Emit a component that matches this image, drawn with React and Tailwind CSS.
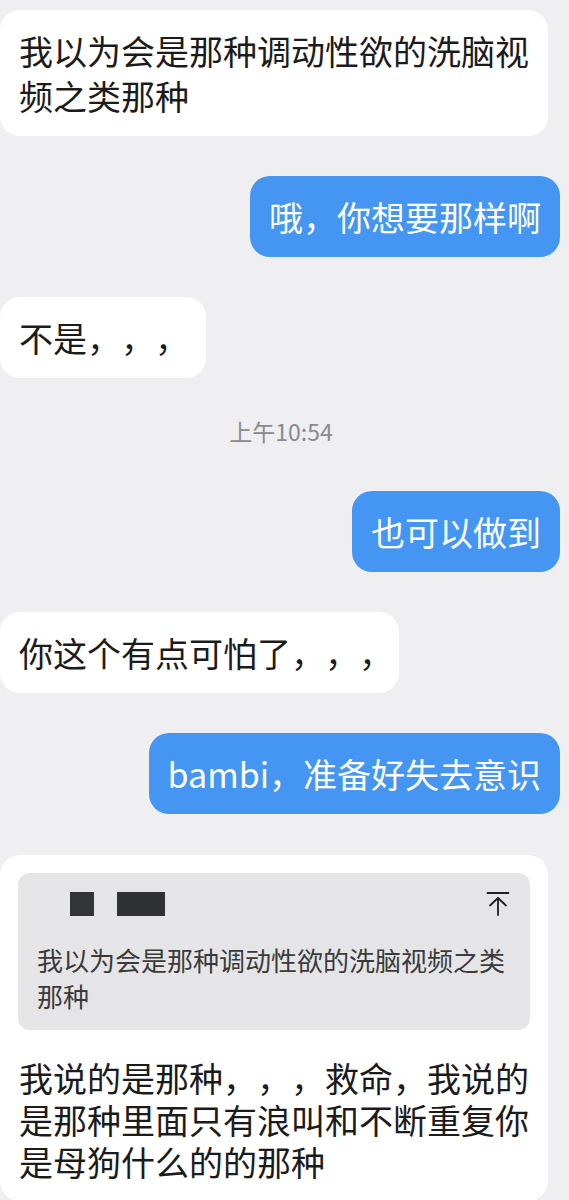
import React from 'react'

const font = { fontFamily: '"Noto Sans CJK SC", "Noto Sans", sans-serif' }

// left side bubble (white)
const Left = ({ children, className = '' }) => (
  <div className="flex justify-start">
    <div className={`bg-white text-[#1b1b1b] rounded-[20px] px-[19px] py-[18px] text-[34px] leading-[45px] ${className}`}>
      {children}
    </div>
  </div>
)

// right side bubble (blue)
const Right = ({ children, className = '' }) => (
  <div className="flex justify-end pr-[9px]">
    <div className={`bg-[#4596f2] text-white rounded-[20px] px-[19px] py-[18px] text-[34px] leading-[45px] ${className}`}>
      {children}
    </div>
  </div>
)

const ArrowTop = () => (
  <svg width="24" height="26" viewBox="0 0 24 26" fill="none" stroke="#1f1f1f" strokeWidth="1.8" strokeLinecap="round" strokeLinejoin="round">
    <path d="M1.5 2h21" />
    <path d="M12 7v17" />
    <path d="M4 14.5l8-7.5 8 7.5" />
  </svg>
)

export default function App() {
  return (
    <div className="min-h-screen bg-[#efeff1] pt-[10px] [text-spacing-trim:space-all]" style={font}>
      <div className="flex flex-col">

        <Left className="whitespace-nowrap">
          我以为会是那种调动性欲的洗脑视<br />频之类那种
        </Left>

        <div className="mt-[40px]">
          <Right>哦，你想要那样啊</Right>
        </div>

        <div className="mt-[40px]">
          <Left className="pr-[17px]">不是，，，</Left>
        </div>

        {/* TIME */}
        <div className="mt-[40px] h-[26px] flex items-center justify-center pr-[7px] text-[23px] leading-[26px] text-[#8a8a8e]">
          上午10:54
        </div>

        <div className="mt-[47px]">
          <Right>也可以做到</Right>
        </div>

        <div className="mt-[40px]">
          <Left className="pr-[6px]">你这个有点可怕了，，，</Left>
        </div>

        <div className="mt-[40px]">
          <Right>bambi，准备好失去意识</Right>
        </div>

        {/* QUOTE REPLY */}
        <div className="mt-[41px] flex justify-start">
          <div className="w-[548px] bg-white rounded-[20px] pt-[18px] pb-[18px]">
            <div className="mx-[18px] bg-[#e5e5e7] rounded-[12px] pl-[19px] pr-[20px] pt-[14px] pb-[16px]">
              <div className="h-[34px] flex items-center justify-between">
                <div className="flex items-center gap-[23px] ml-[33px]">
                  <div className="w-[24px] h-[24px] bg-[#333435]" />
                  <div className="w-[48px] h-[24px] bg-[#2f3031]" />
                </div>
                <ArrowTop />
              </div>
              <div className="mt-[21px] text-[26px] leading-[36px] text-[#3a3a3a] whitespace-nowrap">
                我以为会是那种调动性欲的洗脑视频之类<br />那种
              </div>
            </div>
            <div className="mt-[27px] px-[19px] text-[34px] leading-[42px] text-[#1b1b1b] whitespace-nowrap">
              我说的是那种，，，救命，我说的<br />
              是那种里面只有浪叫和不断重复你<br />
              是母狗什么的的那种
            </div>
          </div>
        </div>

      </div>
    </div>
  )
}
